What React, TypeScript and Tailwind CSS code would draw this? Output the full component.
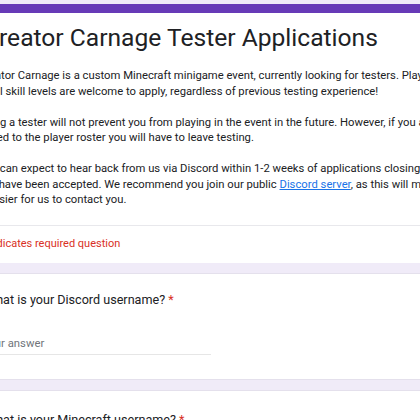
export default function App() {
  return (
    <div
      className="h-[420px] w-[420px] overflow-hidden bg-[#f0ebf8] pt-[4px] text-[#202124]"
      style={{ fontFamily: "Roboto, 'Liberation Sans', sans-serif" }}
    >
      {/* header card */}
      <div className="ml-[-42px] w-[520px] rounded-lg border-t-[9px] border-[#673ab7] bg-white">
        <div className="pl-[24px] pt-[9px] pb-[17px]">
          <div className="ml-[1px] whitespace-nowrap text-[24.6px] leading-[32px]">
            Creator Carnage Tester Applications
          </div>
          <div className="mt-[14.4px] ml-[-4px] whitespace-nowrap text-[11.25px] leading-[15.5px]">
            <div>Creator Carnage is a custom Minecraft minigame event, currently looking for testers. Players</div>
            <div>of all skill levels are welcome to apply, regardless of previous testing experience!</div>
            <div className="h-[15.5px]" />
            <div>Being a tester will not prevent you from playing in the event in the future. However, if you are</div>
            <div>added to the player roster you will have to leave testing.</div>
            <div className="h-[15.5px]" />
            <div>You can expect to hear back from us via Discord within 1-2 weeks of applications closing if</div>
            <div>
              you have been accepted. We recommend you join our public{" "}
              <a className="text-[#1a73e8] underline" href="#">
                Discord server
              </a>
              , as this will make
            </div>
            <div>it easier for us to contact you.</div>
          </div>
        </div>
        <div className="h-px bg-[#e8e8ec]" />
        <div className="pl-[22px] pt-[10px] pb-[11px] whitespace-nowrap text-[11px] leading-[16px] text-[#d93025]">
          * Indicates required question
        </div>
      </div>

      {/* question 1 */}
      <div className="mt-[10px] ml-[-42px] w-[520px] rounded-lg border border-[#e4e0ec] bg-white pl-[24px] pt-[17px] pb-[24px]">
        <div className="ml-[2px] whitespace-nowrap text-[12.6px] leading-[18px]">
          What is your Discord username? <span className="text-[#d93025]">*</span>
        </div>
        <div className="mt-[27.4px] w-[228px] border-b border-[#e6e6e6] pb-[2.5px]">
          <div className="ml-[-1px] whitespace-nowrap text-[11.3px] leading-[15.5px] text-[#70757a]">
            Your answer
          </div>
        </div>
      </div>

      {/* question 2 */}
      <div className="mt-[10px] ml-[-42px] w-[520px] rounded-lg border border-[#e4e0ec] bg-white pl-[24px] pt-[20px] pb-[25px]">
        <div className="ml-[2px] whitespace-nowrap text-[12.6px] leading-[18px]">
          What is your Minecraft username? <span className="text-[#d93025]">*</span>
        </div>
        <div className="mt-[27.4px] w-[228px] border-b border-[#e6e6e6] pb-[2.5px]">
          <div className="whitespace-nowrap text-[11.3px] leading-[15.5px] text-[#70757a]">Your answer</div>
        </div>
      </div>
    </div>
  );
}
